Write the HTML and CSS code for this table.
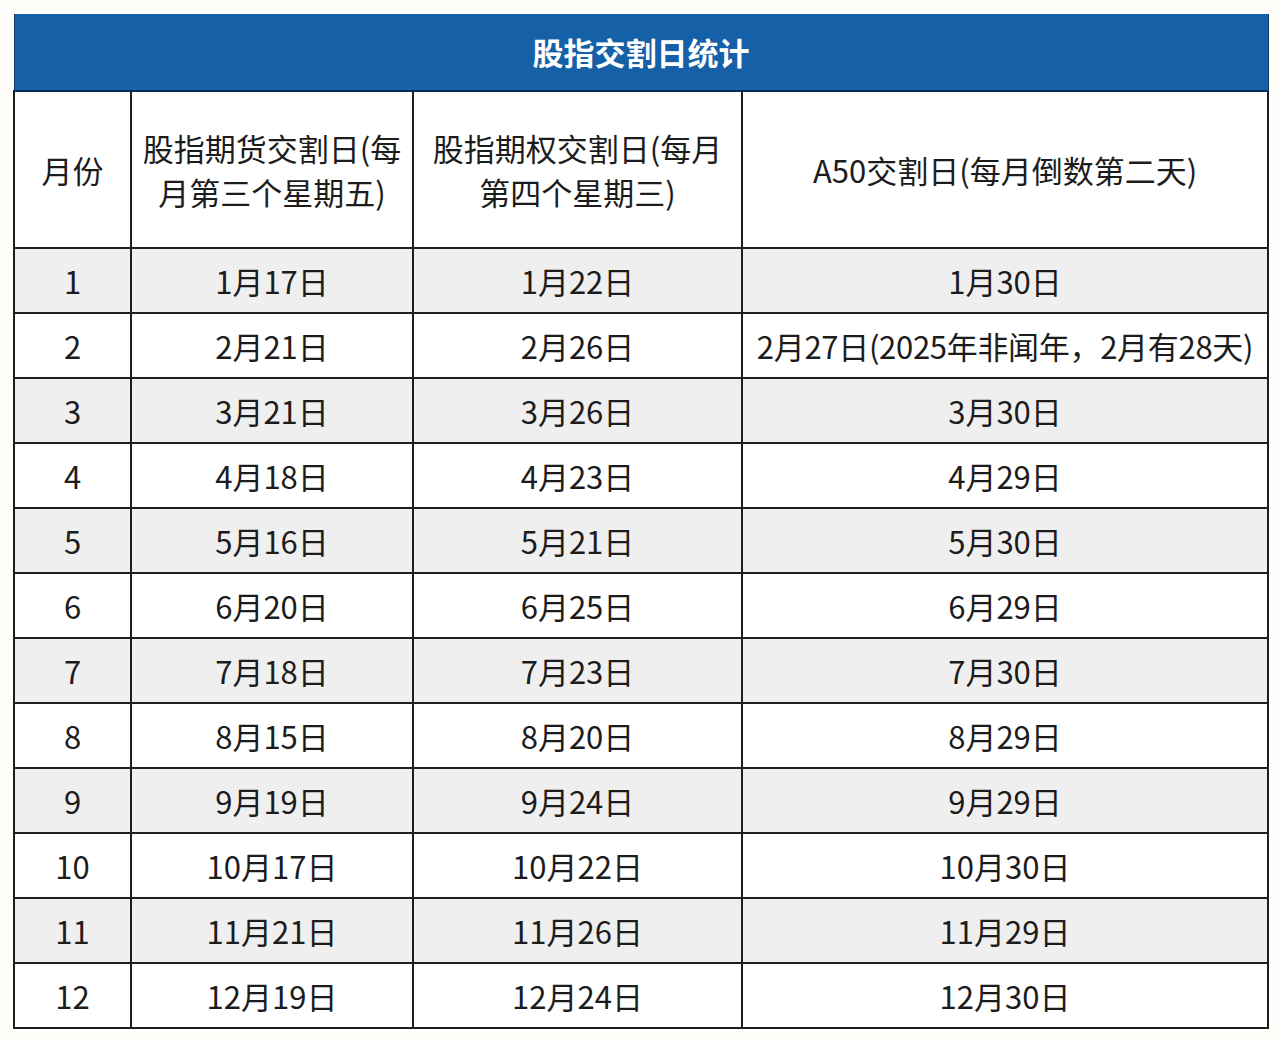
FILE: index.html
```html
<!DOCTYPE html>
<html lang="zh-CN">
<head>
<meta charset="utf-8">
<title>股指交割日统计</title>
<link rel="stylesheet" href="styles.css">
</head>
<body>
<table class="stats">
  <colgroup>
    <col class="c1"><col class="c2"><col class="c3"><col class="c4">
  </colgroup>
  <thead>
    <tr><th class="title" colspan="4">股指交割日统计</th></tr>
    <tr class="head">
      <th>月份</th>
      <th>股指期货交割日(每<br>月第三个星期五)</th>
      <th>股指期权交割日(每月<br>第四个星期三)</th>
      <th>A50交割日(每月倒数第二天)</th>
    </tr>
  </thead>
  <tbody>
    <tr class="odd"><td>1</td><td>1月17日</td><td>1月22日</td><td>1月30日</td></tr>
    <tr><td>2</td><td>2月21日</td><td>2月26日</td><td class="long">2月27日(2025年非闻年，2月有28天)</td></tr>
    <tr class="odd"><td>3</td><td>3月21日</td><td>3月26日</td><td>3月30日</td></tr>
    <tr><td>4</td><td>4月18日</td><td>4月23日</td><td>4月29日</td></tr>
    <tr class="odd"><td>5</td><td>5月16日</td><td>5月21日</td><td>5月30日</td></tr>
    <tr><td>6</td><td>6月20日</td><td>6月25日</td><td>6月29日</td></tr>
    <tr class="odd"><td>7</td><td>7月18日</td><td>7月23日</td><td>7月30日</td></tr>
    <tr><td>8</td><td>8月15日</td><td>8月20日</td><td>8月29日</td></tr>
    <tr class="odd"><td>9</td><td>9月19日</td><td>9月24日</td><td>9月29日</td></tr>
    <tr><td>10</td><td>10月17日</td><td>10月22日</td><td>10月30日</td></tr>
    <tr class="odd"><td>11</td><td>11月21日</td><td>11月26日</td><td>11月29日</td></tr>
    <tr><td>12</td><td>12月19日</td><td>12月24日</td><td>12月30日</td></tr>
  </tbody>
</table>
</body>
</html>
```

FILE: styles.css
```css
html, body {
  margin: 0;
  padding: 0;
  background: #fffefa;
}
body {
  padding: 14px 0 0 13px;
  font-family: "Noto Sans CJK SC", "Noto Sans", sans-serif;
  color: #1c1c1c;
}
.stats {
  border-collapse: collapse;
  table-layout: fixed;
  width: 1254px;
}
.c1 { width: 117px; }
.c2 { width: 282px; }
.c3 { width: 329px; }
.c4 { width: 526px; }

.stats th, .stats td {
  border: 2px solid #1e1e1e;
  padding: 0;
  text-align: center;
  vertical-align: middle;
  font-weight: 400;
  font-size: 31px;
  line-height: 44px;
}
.stats th.title {
  height: 76px;
  background: #1660a8;
  color: #ffffff;
  font-weight: 700;
  font-size: 31px;
  border-left: 1px solid #123a66;
  border-right: 1px solid #123a66;
  border-top: 0;
  border-bottom: 2px solid #0a2b52;
}
.head th {
  height: 155px;
  background: #ffffff;
}
tbody td {
  height: 63px;
  background: #ffffff;
}
tbody tr.odd td {
  background: #f0efef;
}
td.long {
  white-space: nowrap;
  letter-spacing: -0.3px;
}
```
